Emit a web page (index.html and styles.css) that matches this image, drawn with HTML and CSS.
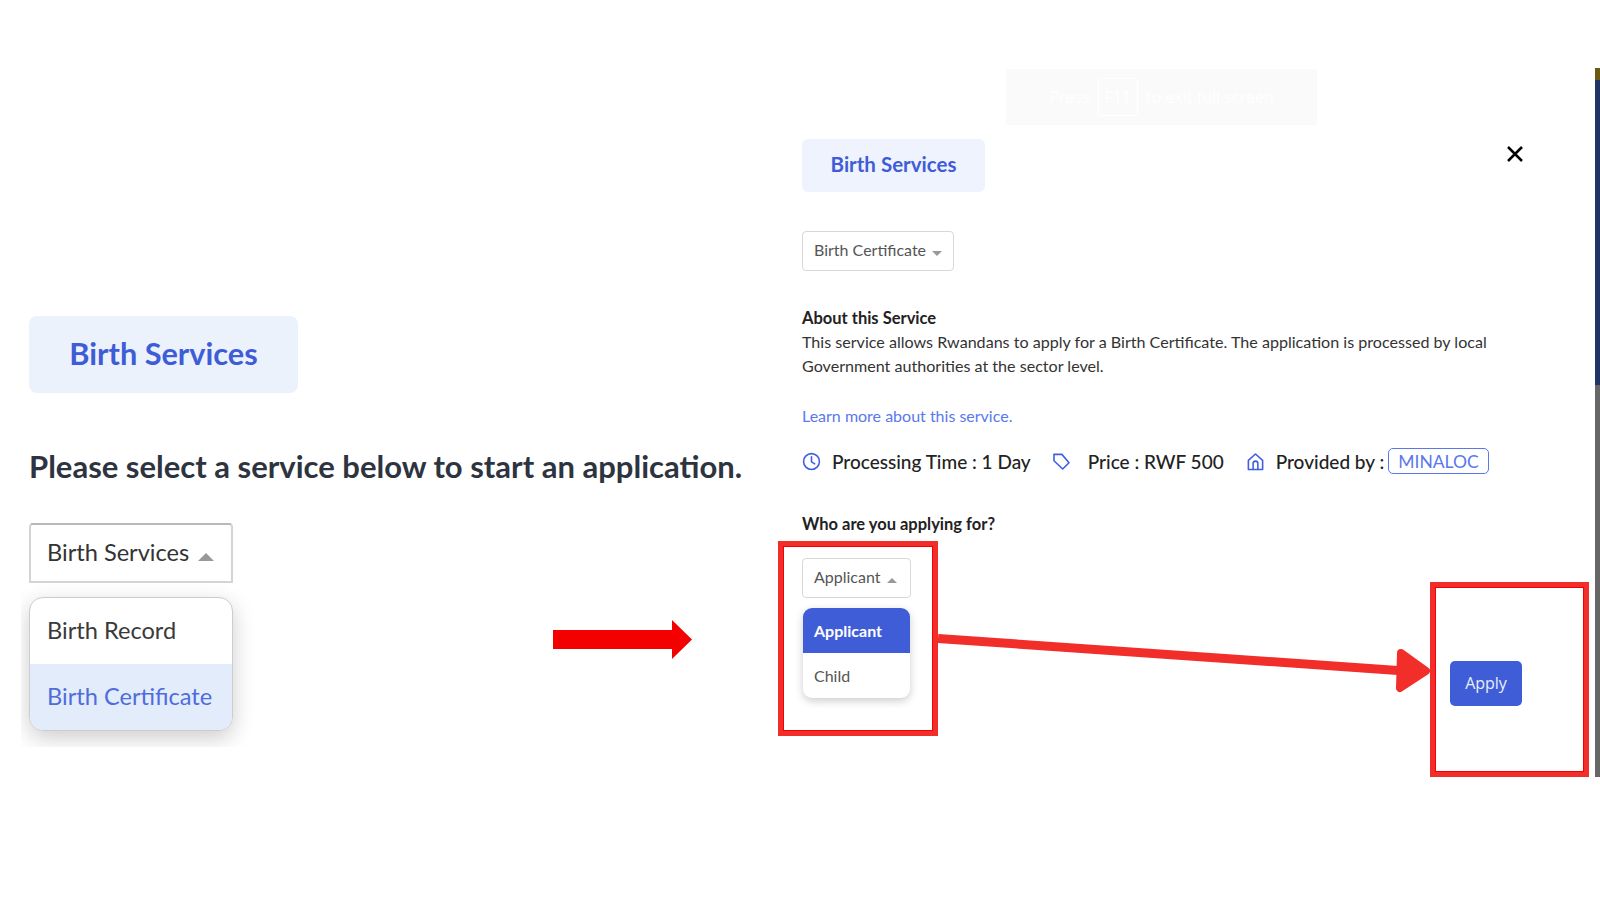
FILE: index.html
```html
<!DOCTYPE html>
<html lang="en">
<head>
<meta charset="utf-8">
<title>Birth Services</title>
<link rel="stylesheet" href="styles.css">
</head>
<body>
<main class="canvas">
  <section class="panel panel-left">
    <div class="badge badge-lg">Birth Services</div>
    <h2 class="lead">Please select a service below to start an application.</h2>
    <div class="select select-lg">Birth Services <span class="caret-up caret-lg"></span></div>
    <div class="menu-clip">
      <ul class="menu menu-lg">
        <li class="item-lg">Birth Record</li>
        <li class="item-lg item-soft">Birth Certificate</li>
      </ul>
    </div>
  </section>

  <section class="panel panel-right">
    <div class="badge badge-sm">Birth Services</div>
    <div class="select select-sm select-cert">Birth Certificate <span class="caret-down"></span></div>
    <h3 class="about-title">About this Service</h3>
    <p class="about-text">This service allows Rwandans to apply for a Birth Certificate. The application is processed by local Government authorities at the sector level.</p>
    <a class="learn" href="#">Learn more about this service.</a>
    <div class="meta">
      <svg class="meta-icon" viewBox="0 0 24 24"><circle cx="12" cy="12" r="10"/><path d="M12 6v6.500l4 2.500"/></svg>
      <span class="meta-time">Processing Time : 1 Day</span>
      <svg class="meta-icon icon-tag" viewBox="0 0 24 24"><path d="M2.500 3h10l9 10.500-8 8-11-10.500z"/></svg>
      <span class="meta-price">Price : RWF 500</span>
      <svg class="meta-icon icon-home" viewBox="0 0 24 24"><path d="M12 2.500 3 10.500V22h18V10.500z"/><path d="M9 22v-7.500a3 3 0 0 1 6 0V22"/></svg>
      <span class="meta-provider">Provided by :</span>
      <span class="tag">MINALOC</span>
    </div>
    <h3 class="who">Who are you applying for?</h3>
    <div class="select select-sm select-app">Applicant <span class="caret-up"></span></div>
    <ul class="menu menu-sm">
      <li class="item-sm item-solid">Applicant</li>
      <li class="item-sm">Child</li>
    </ul>
  </section>

  <div class="toast">Press <kbd class="key">F11</kbd> to exit full screen</div>

  <svg class="close" viewBox="0 0 18 18"><path d="M2 2l14 14M16 2 2 16"/></svg>

  <svg class="arrows" viewBox="0 0 1600 900">
    <path class="arrow-solid" d="M553 630H672V620L692 639.500 672 659V649H553z"/>
    <path class="arrow-line" d="M938 638.500 1405 671"/>
    <path class="arrow-head" d="M1401 653 1426 671 1400 688z"/>
  </svg>

  <div class="frame frame-one"></div>
  <div class="frame frame-two"></div>

  <button class="apply">Apply</button>

  <div class="edge">
    <span class="edge-gold"></span>
    <span class="edge-navy"></span>
    <span class="edge-grey"></span>
  </div>
</main>
</body>
</html>
```
FILE: styles.css
```css
* { box-sizing: border-box; }
html, body { margin: 0; padding: 0; background: #fff; }
body { font-family: "Lato", "Open Sans", sans-serif; color: #2b2b2b; }
.canvas { position: relative; width: 1600px; height: 900px; overflow: hidden; background: #fff; }

.panel { position: absolute; display: flex; flex-direction: column; align-items: flex-start; }
.panel-left { left: 29px; top: 316px; width: 730px; }
.panel-right { left: 802px; top: 139px; width: 700px; }

.badge { display: flex; align-items: center; justify-content: center; font-weight: 700; color: #3f5cd8; }
.badge-lg { width: 269px; height: 77px; padding-bottom: 3px; background: #ebf2fb; border-radius: 8px; font-size: 30.700px; }
.badge-sm { width: 183px; height: 53px; padding-bottom: 3px; background: #eff3fd; border-radius: 6px; font-size: 20.500px; }

.lead { margin: 54px 0 0; font-size: 31px; line-height: 38px; font-weight: 700; color: #2d3440; white-space: nowrap; }

.select { display: flex; align-items: center; background: #fff; white-space: nowrap; }
.select-lg { margin-top: 38px; width: 204px; height: 60px; padding: 0 0 2px 16px; gap: 9px; border: 2px solid #d4d4d4; border-top-color: #b9b9b9; border-radius: 4px 4px 0 0; font-size: 23.600px; color: #333; }
.select-sm { height: 40px; padding: 0 0 3px 11px; gap: 6px; border: 1.500px solid #d8d8d8; border-radius: 4px; font-size: 16px; color: #555; }
.select-cert { margin-top: 39px; width: 152px; }
.select-app { margin-top: 23px; width: 109px; }

.caret-up, .caret-down { display: inline-block; width: 0; height: 0; border-left: 5px solid transparent; border-right: 5px solid transparent; margin-top: 7px; }
.caret-up { border-bottom: 5px solid #999; }
.caret-down { border-top: 5px solid #999; }
.caret-lg { border-left-width: 8px; border-right-width: 8px; border-bottom-width: 8px; margin-top: 10px; }

.menu { list-style: none; margin: 0; padding: 0; background: #fff; overflow: hidden; }
.menu-clip { margin: 0 0 0 -8px; padding: 14px 26px 16px 8px; overflow: hidden; }
.menu-lg { width: 204px; border: 1.500px solid #cdcdcd; border-radius: 14px; box-shadow: 0 7px 22px rgba(0, 0, 0, .2); }
.menu-sm { margin: 10px 0 0 1px; width: 107px; border-radius: 9px; box-shadow: 0 3px 9px rgba(0, 0, 0, .2); }

.item-lg { display: flex; align-items: center; height: 66px; padding: 0 0 2px 17px; font-size: 23.600px; color: #3a3a3a; }
.item-soft { background: #e3ecfb; color: #4f6cdc; }
.item-sm { display: flex; align-items: center; height: 45px; padding: 0 0 1px 11px; font-size: 16px; color: #555; }
.item-solid { background: #405dd8; color: #fff; font-weight: 700; }

.about-title { margin: 35.500px 0 0; font-size: 16.500px; line-height: 23.500px; font-weight: 700; color: #222; }
.about-text { margin: 0; width: 695px; font-size: 16.100px; line-height: 23.500px; color: #333; }
.learn { margin-top: 27px; font-size: 16px; line-height: 23px; color: #5a78ee; text-decoration: none; }

.meta { display: flex; align-items: center; height: 28px; margin-top: 20px; font-size: 19px; font-weight: 500; color: #222; white-space: nowrap; }
.meta-icon { flex: none; width: 19px; height: 19px; fill: none; stroke: #3f5fe0; stroke-width: 2; stroke-linejoin: round; stroke-linecap: round; }
.meta-time { margin-left: 11px; }
.icon-tag { margin-left: 21px; }
.meta-price { margin-left: 17px; }
.icon-home { margin-left: 22px; }
.meta-provider { margin-left: 11px; }
.tag { display: flex; align-items: center; height: 26px; margin-left: 4px; padding: 0 9px; border: 1.500px solid #5a78ee; border-radius: 5px; color: #5a78ee; font-size: 17.500px; font-weight: 400; }

.who { margin: 38px 0 0; font-size: 16.500px; line-height: 22px; font-weight: 700; color: #222; }

.toast { position: absolute; left: 1006px; top: 69px; width: 311px; height: 56px; display: flex; align-items: center; justify-content: center; gap: 8px; background: #fafafa; color: #fff; font-family: "Open Sans", sans-serif; font-size: 16px; }
.key { display: flex; align-items: center; height: 38px; padding: 0 6px; border: 1px solid #fff; border-radius: 2px; font: inherit; }

.close { position: absolute; left: 1506px; top: 145px; width: 18px; height: 18px; fill: none; stroke: #000; stroke-width: 2.500; }

.arrows { position: absolute; left: 0; top: 0; width: 1600px; height: 900px; pointer-events: none; }
.arrow-solid { fill: #f40000; }
.arrow-line { stroke: #f22e2a; stroke-width: 9; fill: none; }
.arrow-head { fill: #f22e2a; stroke: #f22e2a; stroke-width: 8; stroke-linejoin: round; }

.frame { position: absolute; border: 6px solid #f22e2a; outline: 1px solid #f40000; outline-offset: -6px; pointer-events: none; }
.frame-one { left: 778px; top: 541px; width: 160px; height: 195px; }
.frame-two { left: 1430px; top: 582px; width: 159px; height: 195px; }

.apply { position: absolute; left: 1450px; top: 661px; width: 72px; height: 45px; padding-bottom: 3px; border: 0; border-radius: 5px; background: #405dd8; color: #e9eefc; font-family: "Open Sans", sans-serif; font-size: 16px; }

.edge { position: absolute; left: 1595px; top: 68px; width: 5px; height: 709px; display: flex; flex-direction: column; }
.edge-gold { height: 12px; background: #6b5a14; }
.edge-navy { height: 305px; background: #1f3566; }
.edge-grey { flex: 1; background: #666; }
```
